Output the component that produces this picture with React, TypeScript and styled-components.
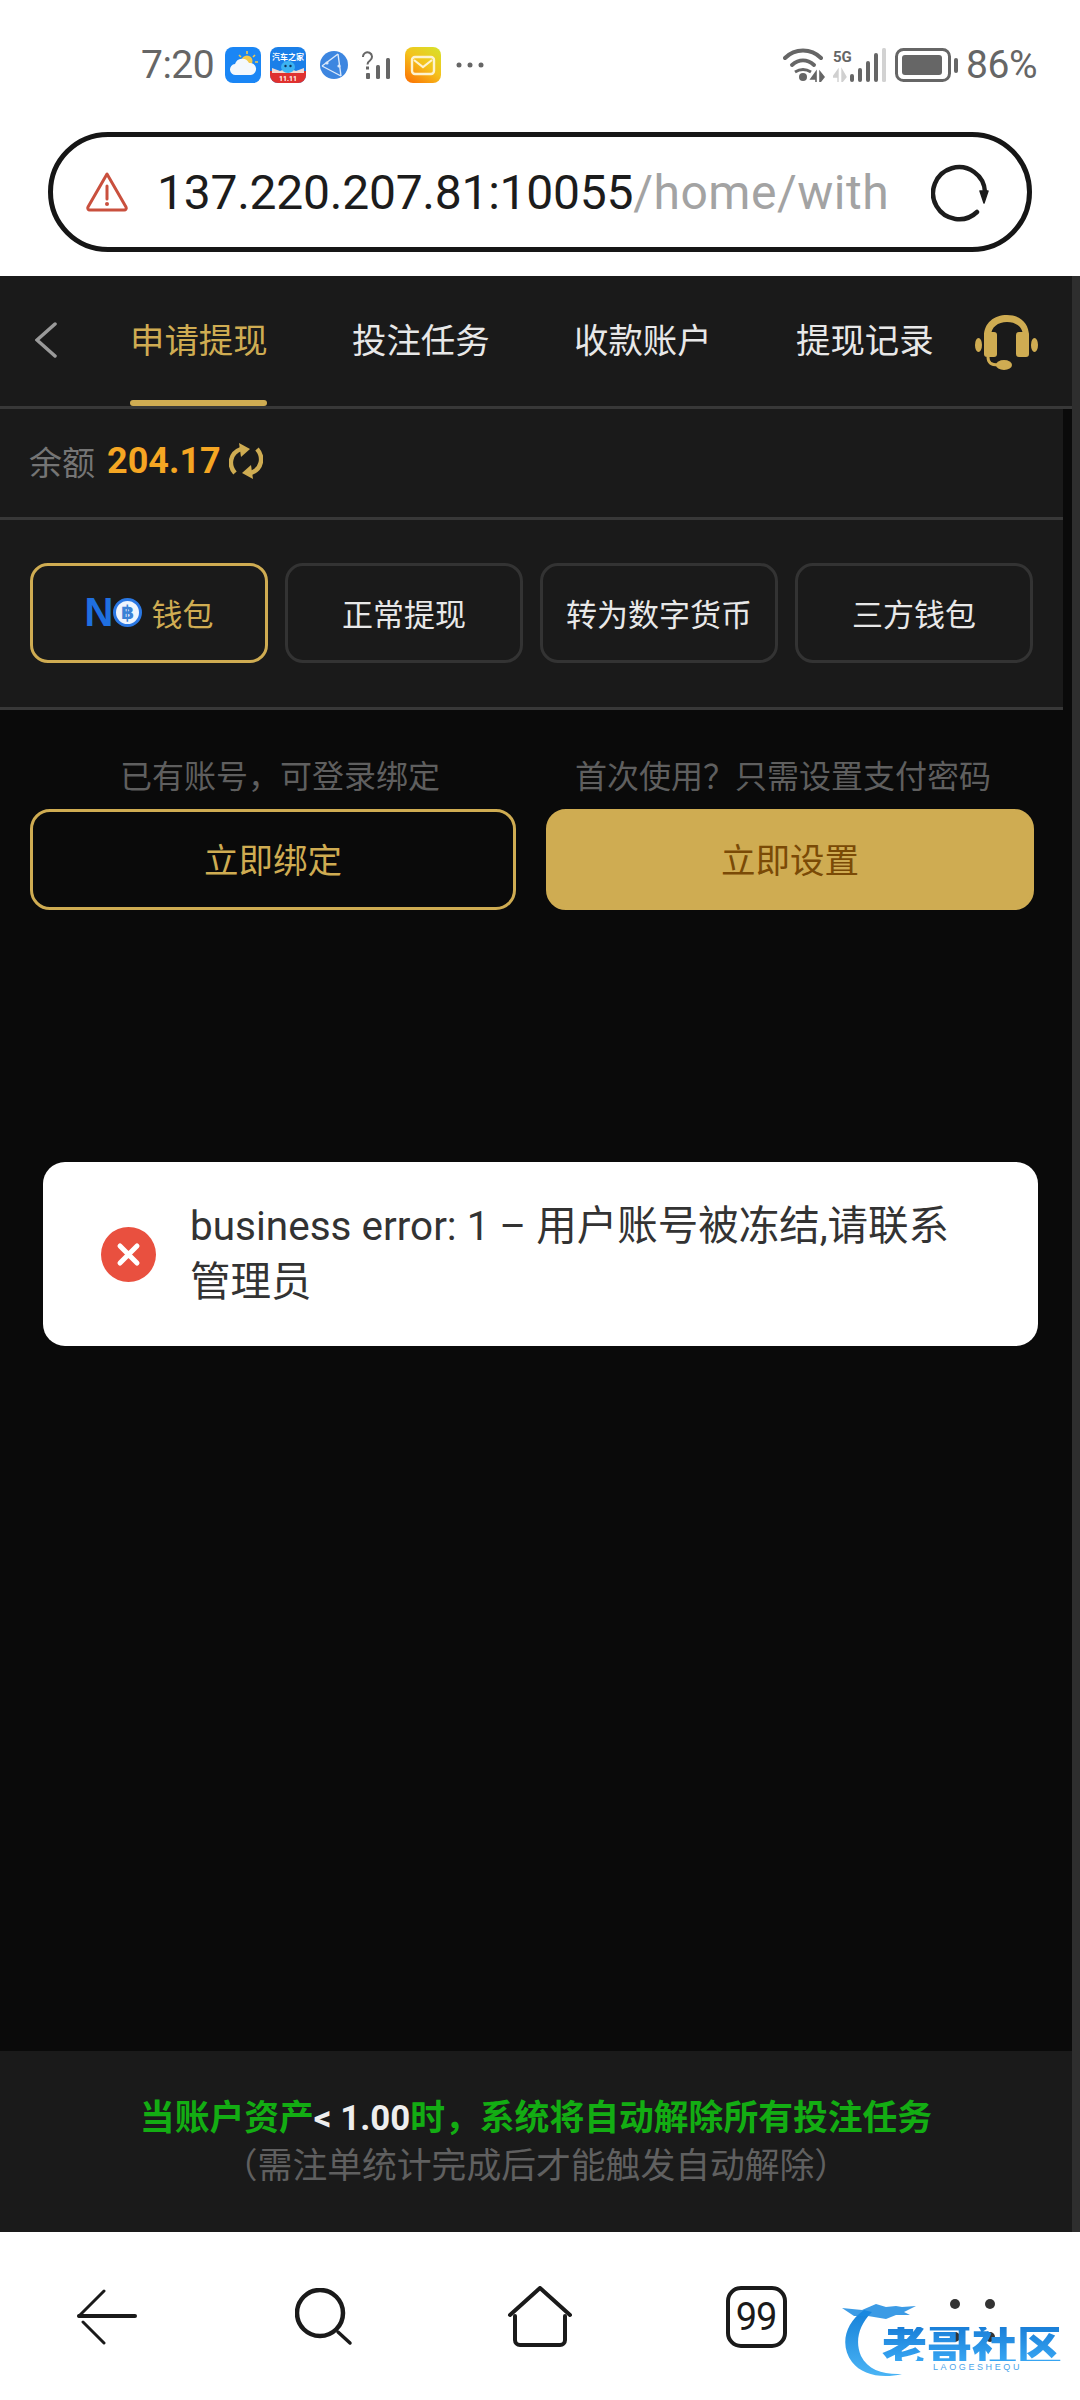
import styled, { createGlobalStyle } from 'styled-components';

const gold = '#cfac52';
const cjk = '"Noto Sans CJK SC", "Noto Sans", sans-serif';

const GlobalStyle = createGlobalStyle`
  html, body {
    margin: 0;
    padding: 0;
    background: #ffffff;
  }
  * {
    box-sizing: border-box;
  }
`;

const Page = styled.div`
  width: 1080px;
  height: 2400px;
  display: flex;
  flex-direction: column;
  overflow: hidden;
  font-family: Roboto, ${cjk};
`;

// Browser chrome
//
const Chrome = styled.div`
  height: 276px;
  background: #ffffff;
  display: flex;
  flex-direction: column;
`;

const StatusBar = styled.div`
  height: 132px;
  padding: 47px 43px 0 141px;
  display: flex;
  align-items: flex-start;
  justify-content: space-between;
  color: #666666;
`;

const StatusGroup = styled.div<{ $gap?: number }>`
  display: flex;
  align-items: center;
  height: 36px;
  gap: ${({ $gap }) => $gap ?? 0}px;
`;

const StatusIcon = styled.span<{ $left: number }>`
  display: flex;
  margin-left: ${({ $left }) => $left}px;
`;

const StatusText = styled.span`
  font-family: Roboto, sans-serif;
  font-size: 39px;
  line-height: 38px;
  letter-spacing: -0.5px;
  color: #666666;
`;

const AddressBar = styled.div`
  margin: 0 48px;
  height: 120px;
  border: 5px solid #161616;
  border-radius: 60px;
  display: flex;
  align-items: center;
  padding: 0 36px 0 32px;
`;

const UrlText = styled.div`
  margin-left: 28px;
  flex: 1;
  font-family: Roboto, sans-serif;
  font-size: 48px;
  letter-spacing: -0.25px;
  color: #1c1c1c;
  white-space: nowrap;
`;

const UrlPath = styled.span`
  letter-spacing: 0.5px;
  color: #a3a3a3;
`;

// Page content
//
const Viewport = styled.div`
  position: relative;
  flex: 1;
  display: flex;
  background: #0a0a0a;
`;

const Main = styled.div`
  width: 1072px;
  display: flex;
  flex-direction: column;
`;

const ScrollTrack = styled.div`
  flex: 1;
  background: #2e2e2e;
`;

const Tabs = styled.div`
  height: 133px;
  display: flex;
  align-items: flex-start;
  background: #1a1a1a;
  border-bottom: 3px solid #383838;
  padding-left: 35px;
`;

const BackButton = styled.div`
  width: 95px;
  height: 130px;
  display: flex;
  align-items: center;
  padding-bottom: 2px;
`;

const Tab = styled.div<{ $active?: boolean }>`
  position: relative;
  width: 137px;
  margin-right: 85px;
  height: 130px;
  padding-top: 37px;
  font-family: ${cjk};
  font-size: 34.4px;
  line-height: 50px;
  white-space: nowrap;
  color: ${({ $active }) => ($active ? gold : '#e8e8e8')};
  ${({ $active }) =>
    $active &&
    `&::after {
      content: '';
      position: absolute;
      left: 0;
      right: 0;
      bottom: 0;
      height: 6px;
      border-radius: 3px;
      background: ${gold};
    }`}
`;

const HeadsetSlot = styled.div`
  margin-left: -43px;
  padding-top: 39px;
`;

const Panel = styled.div`
  width: 1063px;
  background: #1a1a1a;
`;

const BalanceRow = styled.div`
  height: 111px;
  padding: 0 0 4px 29px;
  display: flex;
  align-items: center;
  border-bottom: 3px solid #383838;
`;

const BalanceLabel = styled.span`
  font-family: ${cjk};
  font-size: 33px;
  color: #757575;
`;

const BalanceValue = styled.span`
  margin: 0 8px 0 12px;
  font-family: Roboto, sans-serif;
  font-weight: 700;
  font-size: 36px;
  color: #f5a623;
`;

const WalletRow = styled.div`
  height: 190px;
  padding: 43px 30px 0;
  display: flex;
  gap: 17px;
  border-bottom: 3px solid #383838;
`;

const WalletButton = styled.div<{ $active?: boolean }>`
  width: 238px;
  height: 100px;
  padding-bottom: 2px;
  border-radius: 18px;
  border: 3px solid ${({ $active }) => ($active ? gold : '#333333')};
  display: flex;
  align-items: center;
  justify-content: center;
  gap: 9px;
  font-family: ${cjk};
  font-size: 31px;
  color: ${({ $active }) => ($active ? gold : '#e8e8e8')};
`;

const LogoN = styled.span`
  font-family: "Liberation Sans", sans-serif;
  font-weight: 700;
  font-size: 40px;
  line-height: 1;
  color: #1f6fe0;
`;

const Logo = styled.span`
  display: flex;
  align-items: center;
`;

const BindGrid = styled.div`
  padding: 42px 38px 0 30px;
  display: grid;
  grid-template-columns: 486px 488px;
  column-gap: 30px;
  row-gap: 12px;
`;

const Hint = styled.div<{ $shift: number }>`
  text-align: center;
  font-family: ${cjk};
  font-size: 32px;
  line-height: 45px;
  color: #5f5f5f;
  white-space: nowrap;
  transform: translateX(${({ $shift }) => $shift}px);
`;

const BindButton = styled.div<{ $filled?: boolean }>`
  height: 101px;
  padding-bottom: 4px;
  border-radius: 20px;
  display: flex;
  align-items: center;
  justify-content: center;
  font-family: ${cjk};
  font-size: 34.5px;
  border: 3px solid ${gold};
  background: ${({ $filled }) => ($filled ? gold : 'transparent')};
  color: ${({ $filled }) => ($filled ? '#7a4a06' : gold)};
`;

const Spacer = styled.div`
  flex: 1;
`;

const Notice = styled.div`
  height: 181px;
  background: #1a1a1a;
  padding-top: 42px;
  text-align: center;
  font-family: ${cjk};
  font-size: 34.8px;
  line-height: 45px;
`;

const NoticeStrong = styled.div`
  font-weight: 700;
  color: #13ad13;
`;

const NoticeValue = styled.span`
  font-family: Roboto, sans-serif;
  color: #eeeeee;
`;

const NoticeSub = styled.div`
  color: #606060;
`;

// Toast lies over the page content
//
const Toast = styled.div`
  position: absolute;
  left: 43px;
  top: 886px;
  width: 995px;
  height: 184px;
  border-radius: 22px;
  background: #ffffff;
  display: flex;
  align-items: center;
  padding: 0 62px 0 58px;
  gap: 34px;
`;

const ToastText = styled.div`
  flex: 1;
  font-family: Roboto, ${cjk};
  font-size: 40.5px;
  line-height: 56px;
  color: #333333;
`;

// Bottom navigation
//
const BottomNav = styled.div`
  position: relative;
  height: 168px;
  background: #ffffff;
  display: grid;
  grid-template-columns: repeat(5, 216px);
  justify-items: center;
  padding-top: 54px;
`;

const NavSlot = styled.div`
  width: 80px;
  height: 62px;
  display: flex;
  align-items: center;
  justify-content: center;
`;

const TabCount = styled.div`
  width: 61px;
  height: 62px;
  border: 4px solid #1a1a1a;
  border-radius: 15px;
  display: flex;
  align-items: center;
  justify-content: center;
  font-family: Roboto, sans-serif;
  font-size: 38px;
  letter-spacing: -1px;
  color: #1a1a1a;
`;

const Dots = styled.div`
  display: grid;
  grid-template-columns: 10px 10px;
  column-gap: 25px;
  row-gap: 23px;
  margin-top: 6px;
`;

const Dot = styled.span`
  width: 10px;
  height: 10px;
  border-radius: 50%;
  background: #333333;
`;

const Watermark = styled.div`
  position: absolute;
  left: 842px;
  top: 70px;
  width: 225px;
  height: 78px;
`;

const WatermarkTitle = styled.div`
  position: absolute;
  left: 40px;
  top: 25px;
  font-family: ${cjk};
  font-weight: 900;
  font-size: 45px;
  line-height: 34px;
  white-space: nowrap;
  background: linear-gradient(180deg, #1a7fd8, #37a5f2);
  -webkit-background-clip: text;
  background-clip: text;
  color: transparent;
`;

const WatermarkSub = styled.div`
  position: absolute;
  left: 91px;
  top: 60px;
  font-family: "Liberation Sans", sans-serif;
  font-size: 9px;
  line-height: 10px;
  letter-spacing: 2.6px;
  color: #4aa5ea;
`;

const WeatherIcon = () => (
  <svg width="36" height="36" viewBox="0 0 36 36">
    <rect width="36" height="36" rx="8" fill="#1a86f5" />
    <circle cx="22" cy="14" r="5.5" fill="#f2c94c" />
    <path d="M22 4v3M30 8l-2 2M33 15h-3M14 8l2 2" stroke="#f2c94c" strokeWidth="1.6" />
    <path
      d="M11 28a5.5 5.5 0 0 1-1-11 7.5 7.5 0 0 1 14-1 6 6 0 0 1 2 12z"
      fill="#f4f8fc"
    />
  </svg>
);

const CarAppIcon = () => (
  <svg width="36" height="36" viewBox="0 0 36 36">
    <rect width="36" height="36" rx="8" fill="#1a7fe8" />
    <path d="M0 24h36v4a8 8 0 0 1-8 8H8a8 8 0 0 1-8-8z" fill="#e0312f" />
    <path d="M2 21l8 3 8-3 8 3 8-3v5H2z" fill="#f4d9d0" />
    <ellipse cx="18" cy="20" rx="7" ry="6" fill="#3cb3f2" />
    <circle cx="15.5" cy="19" r="1.2" fill="#10335a" />
    <circle cx="20.5" cy="19" r="1.2" fill="#10335a" />
    <text
      x="18"
      y="12.5"
      textAnchor="middle"
      fontSize="8"
      fontWeight="700"
      fontFamily={cjk}
      fill="#ffffff"
    >
      汽车之家
    </text>
    <text
      x="18"
      y="34"
      textAnchor="middle"
      fontSize="7"
      fontWeight="700"
      fontFamily="Roboto, sans-serif"
      fill="#ffffff"
    >
      11.11
    </text>
  </svg>
);

const GlobeIcon = () => (
  <svg width="28" height="28" viewBox="0 0 28 28">
    <circle cx="14" cy="14" r="14" fill="#3d86e0" />
    <path
      d="M2 15L18 3M2 15l19 10M18 3l3 22"
      stroke="#dce9fa"
      strokeWidth="1.4"
      fill="none"
    />
    <circle cx="7" cy="12" r="1.6" fill="#dce9fa" />
    <circle cx="19" cy="15" r="1.6" fill="#dce9fa" />
  </svg>
);

const UnknownSignal = () => (
  <svg width="34" height="28" viewBox="0 0 34 28">
    <path
      d="M1 6a4.500 4.500 0 1 1 7 3.500c-1.500 1-2.500 2-2.500 4"
      stroke="#666"
      strokeWidth="2"
      fill="none"
    />
    <rect x="4" y="15.500" width="3" height="3" fill="#666" />
    <rect x="4" y="22" width="4" height="6" rx="1" fill="#666" />
    <rect x="14" y="14" width="4" height="14" rx="1.500" fill="#666" />
    <rect x="24" y="7" width="4" height="21" rx="1.500" fill="#666" />
  </svg>
);

const MailIcon = () => (
  <svg width="36" height="36" viewBox="0 0 36 36">
    <defs>
      <linearGradient id="mailBg" x1="0.9" y1="0" x2="0.2" y2="1">
        <stop offset="0" stopColor="#d8e02a" />
        <stop offset="0.5" stopColor="#f4c21c" />
        <stop offset="1" stopColor="#fb7a06" />
      </linearGradient>
    </defs>
    <rect width="36" height="36" rx="8" fill="url(#mailBg)" />
    <rect x="7" y="10" width="22" height="17" rx="3" fill="none" stroke="#fdf3cf" strokeWidth="2.4" />
    <path d="M9 13l9 7 9-7" fill="none" stroke="#fdf3cf" strokeWidth="2.2" />
  </svg>
);

const MoreDots = () => (
  <svg width="28" height="8" viewBox="0 0 28 8">
    <circle cx="3" cy="4" r="2.500" fill="#666" />
    <circle cx="14" cy="4" r="2.500" fill="#666" />
    <circle cx="25" cy="4" r="2.500" fill="#666" />
  </svg>
);

const WifiIcon = () => (
  <svg width="42" height="34" viewBox="0 0 42 34">
    <path d="M2 10C12 0 28 0 38 10" stroke="#666" strokeWidth="4" fill="none" strokeLinecap="round" />
    <path d="M9 17c7-6 15-6 22 0" stroke="#666" strokeWidth="4" fill="none" strokeLinecap="round" />
    <circle cx="20" cy="29" r="4" fill="#666" />
    <path d="M12 24c5-3 11-3 16 0" stroke="#666" strokeWidth="3" fill="none" />
    <path d="M33 34V24l-5 7h5M37 24v10l4-5z" stroke="#666" strokeWidth="1.600" fill="#666" />
  </svg>
);

const CellIcon = () => (
  <svg width="54" height="34" viewBox="0 0 54 34">
    <text x="0" y="14" fontSize="15" fontWeight="700" fontFamily="Roboto, sans-serif" fill="#666">
      5G
    </text>
    <path d="M5 34V22l-5 7h5M9 22v12l4-5z" stroke="#d0d0d0" strokeWidth="1.400" fill="#d0d0d0" />
    <rect x="17" y="26" width="4" height="8" rx="2" fill="#666" />
    <rect x="25" y="20" width="4" height="14" rx="2" fill="#666" />
    <rect x="33" y="13" width="4" height="21" rx="2" fill="#666" />
    <rect x="41" y="5" width="4" height="29" rx="2" fill="#666" />
    <rect x="49" y="0" width="4" height="34" rx="1.500" fill="#d2d2d2" />
  </svg>
);

const BatteryIcon = () => (
  <svg width="63" height="34" viewBox="0 0 63 34">
    <rect x="1.500" y="1.500" width="53" height="31" rx="7" fill="none" stroke="#666" strokeWidth="3" />
    <rect x="7" y="7" width="40" height="20" rx="3" fill="#666" />
    <rect x="59" y="10" width="4" height="15" rx="2" fill="#666" />
  </svg>
);

const WarningIcon = () => (
  <svg width="44" height="42" viewBox="0 0 44 42" fill="none">
    <path
      d="M22 3L3 36a2 2 0 0 0 2 3h34a2 2 0 0 0 2-3z"
      stroke="#c9503e"
      strokeWidth="3"
      strokeLinejoin="round"
    />
    <path d="M22 15v13" stroke="#c9503e" strokeWidth="3" strokeLinecap="round" />
    <circle cx="22" cy="33" r="2" fill="#c9503e" />
  </svg>
);

const ReloadIcon = () => (
  <svg width="60" height="62" viewBox="0 0 60 62" fill="none">
    <path
      d="M54 31A26 26 0 1 0 46 51"
      stroke="#1c1c1c"
      strokeWidth="4.500"
      strokeLinecap="round"
    />
    <path d="M49 30h8l-4 12z" fill="#1c1c1c" stroke="#1c1c1c" strokeWidth="1.500" strokeLinejoin="round" />
  </svg>
);

const ChevronLeft = () => (
  <svg width="22" height="36" viewBox="0 0 22 36" fill="none">
    <path d="M20 2L2 18l18 16" stroke="#9a9a9a" strokeWidth="3.500" strokeLinecap="round" />
  </svg>
);

const HeadsetIcon = () => (
  <svg width="63" height="56" viewBox="0 0 63 56" fill={gold}>
    <path d="M9 28V21C9 8 19 0 32 0s22 8 22 21v7h-6v-7c0-9-7-14-16-14s-16 5-16 14v7z" />
    <rect x="9" y="17" width="13" height="25" rx="3" />
    <rect x="41" y="17" width="13" height="25" rx="3" />
    <ellipse cx="3.500" cy="30" rx="3.500" ry="7" />
    <ellipse cx="59.500" cy="30" rx="3.500" ry="7" />
    <path d="M13 42c0 6 3 8 10 8" fill="none" stroke={gold} strokeWidth="3" />
    <ellipse cx="29" cy="50" rx="8" ry="5" />
  </svg>
);

const SyncIcon = () => (
  <svg width="34" height="36" viewBox="0 0 34 36" fill="none">
    <path d="M6 30C-1 22 1 10 12 6" stroke={gold} strokeWidth="4.500" />
    <path d="M10 0l11 6-9 8z" fill={gold} />
    <path d="M28 6c7 8 5 20-6 24" stroke={gold} strokeWidth="4.500" />
    <path d="M24 36l-11-6 9-8z" fill={gold} />
  </svg>
);

const BitcoinBadge = () => (
  <svg width="29" height="29" viewBox="0 0 29 29">
    <circle cx="14.500" cy="14.500" r="13" fill="#eef5fe" stroke="#2a78e4" strokeWidth="3" />
    <text
      x="14.500"
      y="21"
      textAnchor="middle"
      fontSize="19"
      fontWeight="700"
      fontFamily='"DejaVu Sans", sans-serif'
      fill="#3b82d6"
    >
      ฿
    </text>
  </svg>
);

const ErrorIcon = () => (
  <svg width="55" height="55" viewBox="0 0 55 55">
    <circle cx="27.500" cy="27.500" r="27.500" fill="#e9503f" />
    <path
      d="M19 19l17 17M36 19L19 36"
      stroke="#ffffff"
      strokeWidth="5"
      strokeLinecap="round"
    />
  </svg>
);

const NavBack = () => (
  <svg width="62" height="56" viewBox="0 0 62 56" fill="none" stroke="#1a1a1a" strokeLinecap="round">
    <path d="M2 27h56" strokeWidth="4" />
    <path d="M2 27L27 2" strokeWidth="3" />
    <path d="M6 33l21 21" strokeWidth="3" />
  </svg>
);

const NavSearch = () => (
  <svg width="58" height="58" viewBox="0 0 58 58" fill="none" stroke="#1a1a1a" strokeLinecap="round">
    <circle cx="25" cy="25" r="23" strokeWidth="4.500" />
    <path d="M43 44l12 11" strokeWidth="3.500" />
  </svg>
);

const NavHome = () => (
  <svg width="66" height="62" viewBox="0 0 66 62" fill="none" stroke="#1a1a1a" strokeLinecap="round" strokeLinejoin="round">
    <path d="M3 29L33 2l30 27" strokeWidth="4" />
    <path d="M8 30v24a5 5 0 0 0 5 5h40a5 5 0 0 0 5-5V30" strokeWidth="4" />
  </svg>
);

const WatermarkDragon = () => (
  <svg width="90" height="78" viewBox="0 0 90 78">
    <defs>
      <linearGradient id="dragon" x1="0" y1="0" x2="0" y2="1">
        <stop offset="0" stopColor="#1580d8" />
        <stop offset="1" stopColor="#4ab4f5" />
      </linearGradient>
    </defs>
    <path
      d="M22 8C2 22-2 44 10 60c10 13 30 17 50 12-18 1-34-4-41-18C13 40 16 24 30 10z"
      fill="url(#dragon)"
    />
    <path
      d="M0 6l20 2 14-6 10 3 10-1 6 1 14-1-12 6 6 3-14 0-10 4-18-3-14 0z"
      fill="#1a8ae0"
      opacity="0.85"
    />
  </svg>
);

const App = () => {
  const tabs = ['申请提现', '投注任务', '收款账户', '提现记录'];

  return (
    <Page>
      <GlobalStyle />
      <Chrome>
        <StatusBar>
          <StatusGroup>
            <StatusText>7:20</StatusText>
            <StatusIcon $left={11}>
              <WeatherIcon />
            </StatusIcon>
            <StatusIcon $left={9}>
              <CarAppIcon />
            </StatusIcon>
            <StatusIcon $left={14}>
              <GlobeIcon />
            </StatusIcon>
            <StatusIcon $left={14}>
              <UnknownSignal />
            </StatusIcon>
            <StatusIcon $left={9}>
              <MailIcon />
            </StatusIcon>
            <StatusIcon $left={15}>
              <MoreDots />
            </StatusIcon>
          </StatusGroup>
          <StatusGroup $gap={8}>
            <WifiIcon />
            <CellIcon />
            <BatteryIcon />
            <StatusText>86%</StatusText>
          </StatusGroup>
        </StatusBar>
        <AddressBar>
          <WarningIcon />
          <UrlText>
            137.220.207.81:10055<UrlPath>/home/with</UrlPath>
          </UrlText>
          <ReloadIcon />
        </AddressBar>
      </Chrome>

      <Viewport>
        <Main>
          <Tabs>
            <BackButton>
              <ChevronLeft />
            </BackButton>
            {tabs.map((tab, index) => (
              <Tab key={tab} $active={index === 0}>
                {tab}
              </Tab>
            ))}
            <HeadsetSlot>
              <HeadsetIcon />
            </HeadsetSlot>
          </Tabs>

          <Panel>
            <BalanceRow>
              <BalanceLabel>余额</BalanceLabel>
              <BalanceValue>204.17</BalanceValue>
              <SyncIcon />
            </BalanceRow>
            <WalletRow>
              <WalletButton $active>
                <Logo>
                  <LogoN>N</LogoN>
                  <BitcoinBadge />
                </Logo>
                钱包
              </WalletButton>
              <WalletButton>正常提现</WalletButton>
              <WalletButton>转为数字货币</WalletButton>
              <WalletButton>三方钱包</WalletButton>
            </WalletRow>
          </Panel>

          <BindGrid>
            <Hint $shift={7}>已有账号，可登录绑定</Hint>
            <Hint $shift={-7}>首次使用？只需设置支付密码</Hint>
            <BindButton>立即绑定</BindButton>
            <BindButton $filled>立即设置</BindButton>
          </BindGrid>

          <Spacer />

          <Notice>
            <NoticeStrong>
              当账户资产<NoticeValue>&lt; 1.00</NoticeValue>时，系统将自动解除所有投注任务
            </NoticeStrong>
            <NoticeSub>（需注单统计完成后才能触发自动解除）</NoticeSub>
          </Notice>
        </Main>
        <ScrollTrack />

        <Toast>
          <ErrorIcon />
          <ToastText>business error: 1 – 用户账号被冻结,请联系管理员</ToastText>
        </Toast>
      </Viewport>

      <BottomNav>
        <NavSlot>
          <NavBack />
        </NavSlot>
        <NavSlot>
          <NavSearch />
        </NavSlot>
        <NavSlot>
          <NavHome />
        </NavSlot>
        <NavSlot>
          <TabCount>99</TabCount>
        </NavSlot>
        <NavSlot>
          <Dots>
            <Dot />
            <Dot />
            <Dot />
            <Dot />
          </Dots>
        </NavSlot>
        <Watermark>
          <WatermarkDragon />
          <WatermarkTitle>老哥社区</WatermarkTitle>
          <WatermarkSub>LAOGESHEQU</WatermarkSub>
        </Watermark>
      </BottomNav>
    </Page>
  );
};

export default App;
